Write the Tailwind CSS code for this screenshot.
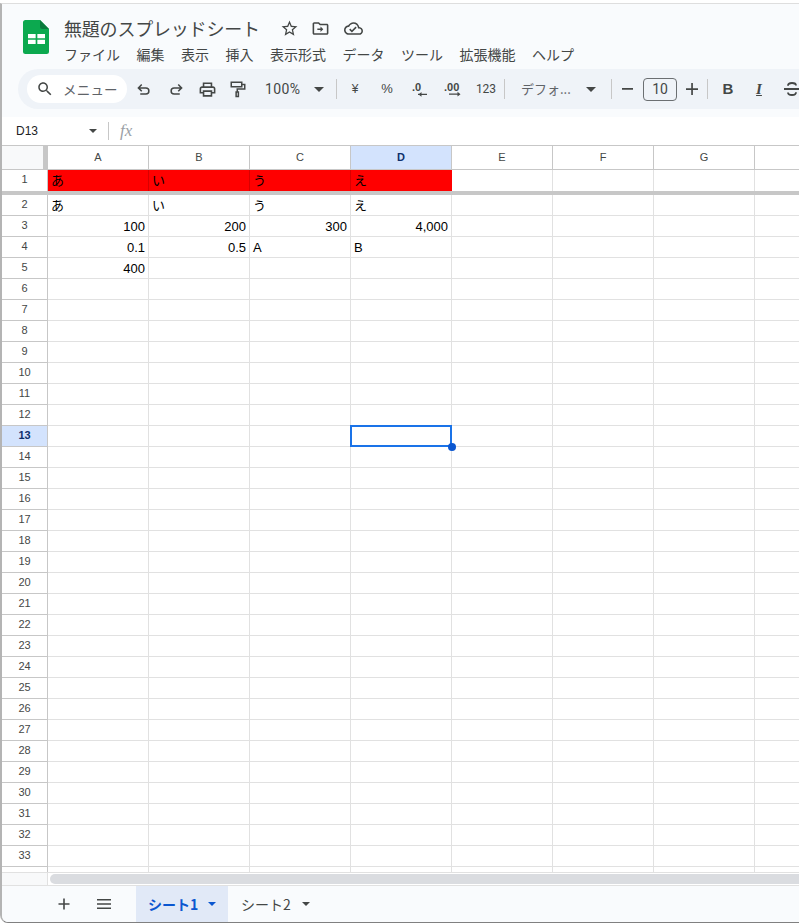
<!DOCTYPE html>
<html lang="ja">
  <head>
    <meta charset="UTF-8" />
    <title>無題のスプレッドシート</title>
    <script src="https://cdn.jsdelivr.net/npm/@tailwindcss/browser@4"></script>
  </head>
  <body class="bg-white">
    <div class="relative w-[799px] h-[923px] overflow-hidden flex flex-col bg-white font-['Liberation_Sans','Noto_Sans_CJK_JP',sans-serif] text-[#444746]">
      <!-- Window edge -->
      <div class="h-[3px] shrink-0 bg-white"></div>
      <div class="flex-1 min-h-0 flex flex-col border-l-2 border-b border-t border-t-[#dedede] border-l-[#b4b4b4] border-b-[#808080] rounded-bl-lg overflow-hidden">

        <!-- Header -->
        <div class="h-[113px] shrink-0 bg-[#f9fbfd]">
          <div class="flex h-[65px]">
            <svg class="ml-[21px] mt-[16px] w-[26px] h-[34px]" viewBox="0 0 26 34">
              <path d="M2.500 0H17l9 9v22.500a2.500 2.500 0 0 1-2.500 2.500h-21A2.500 2.500 0 0 1 0 31.500v-29A2.500 2.500 0 0 1 2.500 0z" fill="#0ca94f" />
              <path d="M17 0l9 9h-6.500A2.500 2.500 0 0 1 17 6.500z" fill="#0a7a3c" />
              <path d="M5 14h17v10H5z" fill="#fff" />
              <path d="M13.500 14v10M5 19h17" stroke="#0ca94f" stroke-width="1.700" fill="none" />
            </svg>
            <div class="ml-[15px]">
              <div class="flex items-center h-[30px] mt-[9px]">
                <span class="text-[18px] leading-[26px] tracking-[-0.2px] text-[#444746] font-['Noto_Sans_CJK_JP',sans-serif]">無題のスプレッドシート</span>
                <svg class="ml-[20px] w-[19px] h-[19px]" viewBox="0 0 24 24" fill="#444746"><path d="M22 9.240l-7.190-.620L12 2 9.190 8.630 2 9.240l5.460 4.730L5.820 21 12 17.270 18.180 21l-1.630-7.030L22 9.240zM12 15.400l-3.760 2.270 1-4.280-3.320-2.880 4.380-.380L12 6.100l1.710 4.040 4.380.380-3.320 2.880 1 4.280L12 15.400z" /></svg>
                <svg class="ml-[12px] w-[19px] h-[19px]" viewBox="0 0 24 24" fill="#444746"><path d="M20 6h-8l-2-2H4c-1.100 0-2 .900-2 2v12c0 1.100.900 2 2 2h16c1.100 0 2-.900 2-2V8c0-1.100-.900-2-2-2zm0 12H4V6h5.170l2 2H20v10zm-8-4H8v-2h4V9.500l3.500 3.500-3.500 3.500V14z" /></svg>
                <svg class="ml-[14px] w-[19px] h-[19px]" viewBox="0 0 24 24" fill="#444746"><path d="M19.350 10.040C18.670 6.590 15.640 4 12 4 9.110 4 6.600 5.640 5.350 8.040 2.340 8.360 0 10.910 0 14c0 3.310 2.690 6 6 6h13c2.760 0 5-2.240 5-5 0-2.640-2.050-4.780-4.650-4.960zM19 18H6c-2.210 0-4-1.790-4-4 0-2.050 1.530-3.760 3.560-3.970l1.070-.110.500-.950C8.080 7.140 9.940 6 12 6c2.620 0 4.880 1.860 5.390 4.430l.300 1.500 1.530.110c1.560.100 2.780 1.410 2.780 2.960 0 1.650-1.350 3-3 3zm-9-3.820l-2.090-2.090L6.500 13.500 10 17l6.010-6.010-1.410-1.410z" /></svg>
              </div>
              <div class="flex gap-[16.500px] text-[14px] leading-[20px] text-[#444746] mt-[1px] whitespace-nowrap font-['Noto_Sans_CJK_JP',sans-serif]">
                <span>ファイル</span><span>編集</span><span>表示</span><span>挿入</span><span>表示形式</span><span>データ</span><span>ツール</span><span>拡張機能</span><span>ヘルプ</span>
              </div>
            </div>
          </div>

          <!-- Toolbar -->
          <div class="ml-[16px] h-[40px] bg-[#eff3f8] rounded-l-full flex items-center whitespace-nowrap text-[#444746]">
            <div class="ml-[9px] w-[100px] h-[28px] shrink-0 bg-white rounded-full flex items-center">
              <svg class="ml-[9px] w-[18px] h-[18px]" viewBox="0 0 24 24" fill="#444746"><path d="M15.500 14h-.790l-.280-.270C15.410 12.590 16 11.110 16 9.500 16 5.910 13.090 3 9.500 3S3 5.910 3 9.500 5.910 16 9.500 16c1.610 0 3.090-.590 4.230-1.570l.270.280v.790l5 4.990L20.490 19l-4.990-5zm-6 0C7.010 14 5 11.990 5 9.500S7.010 5 9.500 5 14 7.010 14 9.500 11.990 14 9.500 14z" /></svg>
              <span class="ml-[9px] text-[13.500px] tracking-[0.2px] text-[#5f6368] font-['Noto_Sans_CJK_JP',sans-serif]">メニュー</span>
            </div>
            <div class="w-[32px] ml-[1px] flex justify-center shrink-0">
              <svg class="w-[18px] h-[18px]" viewBox="0 0 24 24" fill="none" stroke="#444746" stroke-width="2"><path d="M9 6 4.500 10.500 9 15M5 10.500h9.500a4 4 0 0 1 0 8H7" /></svg>
            </div>
            <div class="w-[31px] flex justify-center shrink-0">
              <svg class="w-[18px] h-[18px]" viewBox="0 0 24 24" fill="none" stroke="#444746" stroke-width="2"><path d="M15 6l4.500 4.500L15 15M19 10.500H9.500a4 4 0 0 0 0 8H17" /></svg>
            </div>
            <div class="w-[33px] flex justify-center shrink-0">
              <svg class="w-[19px] h-[19px]" viewBox="0 0 24 24" fill="#444746"><path d="M19 8h-1V3H6v5H5c-1.660 0-3 1.340-3 3v6h4v4h12v-4h4v-6c0-1.660-1.340-3-3-3zM8 5h8v3H8V5zm8 12v2H8v-4h8v2zm2-2v-2H6v2H4v-4c0-.550.450-1 1-1h14c.550 0 1 .450 1 1v4h-2z" /></svg>
            </div>
            <div class="w-[28px] flex justify-center shrink-0">
              <svg class="w-[18px] h-[18px]" viewBox="0 0 24 24" fill="none" stroke="#444746" stroke-width="2"><path d="M3 3h14v6H3zM17 6h4v6H11v4" /><path d="M9.500 16h3v6h-3z" /></svg>
            </div>
            <span class="ml-[13px] w-[49px] shrink-0 text-[14px] text-[#444746] font-['Roboto',sans-serif] tracking-[0.4px]">100%</span>
            <span class="w-0 h-0 shrink-0 border-x-[5px] border-x-transparent border-t-[5px] border-t-[#444746]"></span>
            <span class="ml-[12px] w-px h-[20px] shrink-0 bg-[#c7c7c7]"></span>
            <div class="w-[36px] text-center text-[12px] shrink-0">¥</div>
            <div class="w-[28px] text-center text-[13px] shrink-0">%</div>
            <div class="ml-[1px] w-[36px] flex justify-center shrink-0">
              <svg class="w-[20px] h-[20px]" viewBox="0 0 20 20" fill="#444746"><text x="2" y="12" font-size="11" font-weight="700" font-family="Liberation Sans">.0</text><path d="M8 16h9v-1.200H8z" /><path d="M8.500 15.400l3-2.400v4.800z" /></svg>
            </div>
            <div class="w-[32px] flex justify-center shrink-0">
              <svg class="w-[24px] h-[20px]" viewBox="0 0 24 20" fill="#444746"><text x="2" y="12" font-size="11" font-weight="700" font-family="Liberation Sans">.00</text><path d="M7 15.800h9v-1.200H7z" /><path d="M18.500 15.200l-3-2.400v4.800z" /></svg>
            </div>
            <div class="w-[32px] text-center text-[12px] shrink-0 font-['Roboto',sans-serif]">123</div>
            <span class="ml-[2px] w-px h-[20px] shrink-0 bg-[#c7c7c7]"></span>
            <span class="ml-[16px] w-[60px] shrink-0 text-[13px] text-[#5f6368] font-['Noto_Sans_CJK_JP',sans-serif]">デフォ...</span>
            <span class="ml-[5px] w-0 h-0 shrink-0 border-x-[5px] border-x-transparent border-t-[5px] border-t-[#444746]"></span>
            <span class="ml-[15px] w-px h-[20px] shrink-0 bg-[#c7c7c7]"></span>
            <svg class="ml-[7px] w-[16px] h-[16px] shrink-0" viewBox="0 0 16 16" fill="#444746"><path d="M3 7h11v1.700H3z" /></svg>
            <div class="ml-[8px] w-[34px] h-[23px] shrink-0 border border-[#6b6f72] rounded-[4px] bg-[#eff3f8] flex items-center justify-center text-[14px] font-['Roboto',sans-serif]">10</div>
            <svg class="ml-[7px] w-[16px] h-[16px] shrink-0" viewBox="0 0 16 16" fill="#444746"><path d="M2 7.200h12v1.700H2z" /><path d="M7.200 2h1.700v12H7.200z" /></svg>
            <span class="ml-[7px] w-px h-[20px] shrink-0 bg-[#c7c7c7]"></span>
            <span class="ml-[14px] w-[12px] shrink-0 text-center text-[15px] font-bold text-[#444746]">B</span>
            <span class="ml-[19px] w-[12px] shrink-0 text-center text-[15px] font-bold italic text-[#444746] font-['Liberation_Serif',serif] underline">I</span>
            <svg class="ml-[19px] w-[16px] h-[18px] shrink-0" viewBox="0 0 16 18" fill="none" stroke="#444746" stroke-width="1.800"><path d="M0 9h16" /><path d="M12 5.500C12 3.500 10 3 8 3S4 4 4 5.800" /><path d="M4 12.500C4 14.500 6 15 8 15s4-1 4-2.800" /></svg>
          </div>
        </div>

        <!-- Name box -->
        <div class="h-[28px] shrink-0 flex items-center bg-white">
          <span class="ml-[14px] w-[73px] text-[12px] text-[#202124]">D13</span>
          <span class="w-0 h-0 border-x-[4px] border-x-transparent border-t-[4px] border-t-[#444746]"></span>
          <span class="ml-[11px] w-px h-[18px] bg-[#c7c7c7]"></span>
          <span class="ml-[11px] text-[17px] italic text-[#9aa0a6] font-['Liberation_Serif',serif]">fx</span>
        </div>

        <!-- Grid -->
        <div id="sheet" class="h-[727px] shrink-0 border-t border-[#c7c7c7] overflow-hidden bg-white">
          <div class="flex h-[24px] border-b border-[#c7c7c7]">
            <div class="w-[46px] shrink-0 bg-[#f8f9fa] border-r-[5px] border-[#c7c7c7]"></div>
            <div class="w-[101px] shrink-0 border-r border-[#c7c7c7] flex items-center justify-center text-[11px] text-[#444746]">A</div>
            <div class="w-[101px] shrink-0 border-r border-[#c7c7c7] flex items-center justify-center text-[11px] text-[#444746]">B</div>
            <div class="w-[101px] shrink-0 border-r border-[#c7c7c7] flex items-center justify-center text-[11px] text-[#444746]">C</div>
            <div class="w-[101px] shrink-0 border-r border-[#c7c7c7] bg-[#d3e3fd] flex items-center justify-center text-[11px] font-bold text-[#0e2f6b]">D</div>
            <div class="w-[101px] shrink-0 border-r border-[#c7c7c7] flex items-center justify-center text-[11px] text-[#444746]">E</div>
            <div class="w-[101px] shrink-0 border-r border-[#c7c7c7] flex items-center justify-center text-[11px] text-[#444746]">F</div>
            <div class="w-[101px] shrink-0 border-r border-[#c7c7c7] flex items-center justify-center text-[11px] text-[#444746]">G</div>
            <div class="flex-1"></div>
          </div>
          <div class="flex h-[21px] text-[13px] text-black font-['Noto_Sans_CJK_JP',sans-serif]">
            <div class="w-[46px] shrink-0 border-r border-[#c7c7c7] pb-[2px] flex items-center justify-center text-[11px] text-[#444746] font-['Liberation_Sans',sans-serif]">1</div>
            <div class="w-[101px] shrink-0 bg-[#ff0000] border-r border-[#d80000] pl-[3px] pb-px flex items-center">あ</div>
            <div class="w-[101px] shrink-0 bg-[#ff0000] border-r border-[#d80000] pl-[3px] pb-px flex items-center">い</div>
            <div class="w-[101px] shrink-0 bg-[#ff0000] border-r border-[#d80000] pl-[3px] pb-px flex items-center">う</div>
            <div class="w-[101px] shrink-0 bg-[#ff0000] pl-[3px] pb-px flex items-center">え</div>
            <div class="w-[101px] shrink-0 border-r border-[#e1e1e1]"></div>
            <div class="w-[101px] shrink-0 border-r border-[#e1e1e1]"></div>
            <div class="w-[101px] shrink-0 border-r border-[#e1e1e1]"></div>
            <div class="flex-1"></div>
          </div>
          <div class="h-[4px] bg-[#c7c7c7]"></div>
          <div id="rows"></div>
        </div>

        <!-- Horizontal scrollbar -->
        <div class="h-[13px] shrink-0 flex border-t border-[#e1e1e1] bg-white">
          <div class="w-[46px] shrink-0 bg-[#f8f9fa] border-r border-[#e1e1e1]"></div>
          <div class="flex-1 ml-[2px] mt-[1px] h-[10px] bg-[#dadce0] rounded-l-full"></div>
        </div>

        <!-- Sheet tabs -->
        <div class="flex-1 min-h-0 flex items-stretch border-t border-[#e1e1e1] bg-[#f9fbfd] whitespace-nowrap font-['Noto_Sans_CJK_JP',sans-serif]">
          <div class="ml-[54px] w-[16px] flex items-center">
            <svg class="w-[16px] h-[16px]" viewBox="0 0 16 16" fill="#444746"><path d="M2.500 7.200h11v1.600h-11z" /><path d="M7.200 2.500h1.600v11H7.200z" /></svg>
          </div>
          <div class="ml-[23px] w-[22px] flex items-center">
            <svg class="w-[16px] h-[12px] ml-[1px]" viewBox="0 0 16 12" fill="#444746"><path d="M1 1h14v1.500H1zM1 5.200h14v1.500H1zM1 9.500h14V11H1z" /></svg>
          </div>
          <div class="ml-[19px] w-[92px] bg-[#e1e9f7] flex items-center text-[14px] font-bold text-[#0b57d0]">
            <span class="ml-[12px] w-[58px]">シート1</span>
            <span class="ml-[2px] w-0 h-0 border-x-[4px] border-x-transparent border-t-[4px] border-t-[#0b57d0]"></span>
          </div>
          <div class="flex items-center text-[14px] text-[#444746]">
            <span class="ml-[13px] w-[60px]">シート2</span>
            <span class="ml-[1px] w-0 h-0 border-x-[4px] border-x-transparent border-t-[4px] border-t-[#444746]"></span>
          </div>
        </div>
      </div>

      <!-- Selected cell D13 -->
      <div class="absolute left-[350px] top-[425px] w-[102px] h-[22px] border-2 border-[#1a73e8]"></div>
      <div class="absolute left-[448px] top-[443px] w-[8px] h-[8px] rounded-full bg-[#0b57d0]"></div>
    </div>

    <script>
      var data = {
        2: ["あ", "い", "う", "え"],
        3: ["100", "200", "300", "4,000"],
        4: ["0.1", "0.5", "A", "B"],
        5: ["400"]
      };
      var html = "";
      for (var r = 2; r <= 34; r++) {
        var head = r == 13
          ? "w-[46px] shrink-0 border-r border-b border-[#c7c7c7] bg-[#d3e3fd] pb-[2px] flex items-center justify-center text-[11px] font-bold text-[#0e2f6b]"
          : "w-[46px] shrink-0 border-r border-b border-[#c7c7c7] pb-[2px] flex items-center justify-center text-[11px] text-[#444746]";
        html += '<div class="flex h-[21px]"><div class="' + head + '">' + (r == 34 ? "" : r) + "</div>";
        for (var c = 0; c < 7; c++) {
          var v = (data[r] && data[r][c]) || "";
          var cls = /^[0-9]/.test(v)
            ? "w-[101px] shrink-0 border-r border-b border-[#e1e1e1] px-[3px] pt-px flex items-center justify-end text-[13px] text-black"
            : "w-[101px] shrink-0 border-r border-b border-[#e1e1e1] px-[3px] pt-px flex items-center text-[13px] text-black";
          html += '<div class="' + cls + '">' + v + "</div>";
        }
        html += '<div class="flex-1 border-b border-[#e1e1e1]"></div></div>';
      }
      document.getElementById("rows").innerHTML = html;
    </script>
  </body>
</html>
